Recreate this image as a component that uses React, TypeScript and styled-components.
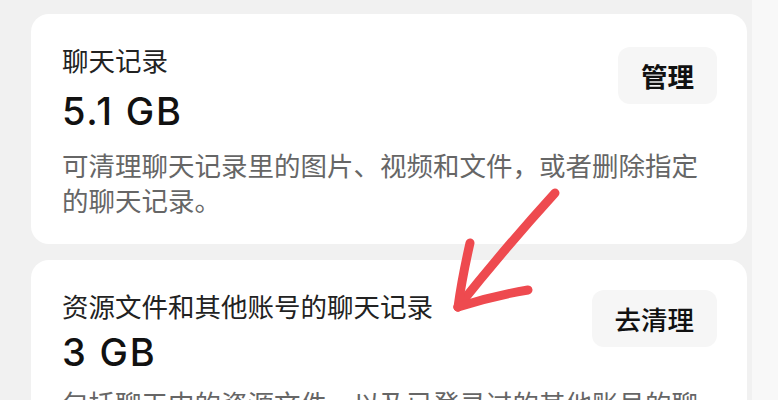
import React from 'react';
import styled, {createGlobalStyle} from 'styled-components';

const GlobalStyle = createGlobalStyle`
  html, body {
    margin: 0;
    padding: 0;
    background: #f2f2f2;
  }
  body {
    font-family: "Noto Sans CJK SC", "Noto Sans", sans-serif;
  }
`;

const Page = styled.div`
  position: relative;
  width: 778px;
  height: 400px;
  overflow: hidden;
  display: flex;
`;

const Main = styled.div`
  width: 752px;
  padding: 14px 5px 0 31px;
  box-sizing: border-box;
  display: flex;
  flex-direction: column;
  gap: 16px;
  background: #f1f1f1;
`;

const SideStrip = styled.div`
  flex: 1;
  background: #f8f8f8;
`;

const Card = styled.div<{ $tight?: boolean }>`
  background: #ffffff;
  border-radius: 18px;
  padding: 29px 30px 27px 31px;
  width: 716px;
  box-sizing: border-box;
`;

const HeaderRow = styled.div`
  display: flex;
  justify-content: space-between;
  align-items: flex-start;
`;

const Info = styled.div`
  display: flex;
  flex-direction: column;
`;

const Title = styled.div`
  font-size: 26.5px;
  line-height: 34px;
  color: #222;
`;

const Size = styled.div<{ $tight?: boolean }>`
  margin-top: ${p => (p.$tight ? 5 : 10)}px;
  font-family: "Inter", "Roboto", sans-serif;
  font-weight: 500;
  font-size: 38px;
  line-height: 48px;
  letter-spacing: 1.8px;
  color: #111;
`;

const ActionButton = styled.button<{ $bold?: boolean }>`
  margin-top: ${p => (p.$bold ? 4 : 1)}px;
  height: 57px;
  padding: 0 23px;
  border: none;
  border-radius: 12px;
  background: #f6f6f6;
  color: #111;
  font-family: "Noto Sans CJK SC", sans-serif;
  font-size: 26.5px;
  font-weight: ${p => (p.$bold ? 600 : 500)};
  line-height: 28px;
`;

const Description = styled.p<{ $tight?: boolean }>`
  margin: ${p => (p.$tight ? 9 : 12)}px 0 0;
  font-size: 26.5px;
  line-height: 35px;
  color: #666;
`;

const ArrowLayer = styled.svg`
  position: absolute;
  left: 0;
  top: 0;
  pointer-events: none;
`;

const cards = [
    {
        title: '聊天记录',
        size: '5.1 GB',
        action: '管理',
        bold: true,
        tight: false,
        desc: '可清理聊天记录里的图片、视频和文件，或者删除指定的聊天记录。',
    },
    {
        title: '资源文件和其他账号的聊天记录',
        size: '3 GB',
        action: '去清理',
        bold: false,
        tight: true,
        desc: '包括聊天中的资源文件，以及已登录过的其他账号的聊天记录。',
    },
];

export default function App() {
    return (
        <>
            <GlobalStyle/>
            <Page>
                <Main>
                    {cards.map(c => (
                        <Card key={c.title}>
                            <HeaderRow>
                                <Info>
                                    <Title>{c.title}</Title>
                                    <Size $tight={c.tight}>{c.size}</Size>
                                </Info>
                                <ActionButton $bold={c.bold}>{c.action}</ActionButton>
                            </HeaderRow>
                            <Description $tight={c.tight}>{c.desc}</Description>
                        </Card>
                    ))}
                </Main>
                <SideStrip/>
                {/* hand-drawn red arrow on top of the screenshot */}
                <ArrowLayer width="778" height="400" viewBox="0 0 778 400">
                    <g fill="none" stroke="#ee4a4f" strokeWidth="9" strokeLinecap="round" strokeLinejoin="round">
                        <path d="M555 193 Q505 248 458 307"/>
                        <path d="M470 243 Q462 278 458 307"/>
                        <path d="M458 307 Q492 296 528 290"/>
                    </g>
                </ArrowLayer>
            </Page>
        </>
    );
}
